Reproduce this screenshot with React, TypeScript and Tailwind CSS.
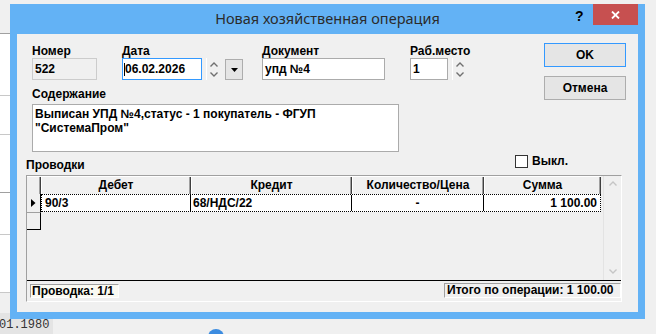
const UI = "font-['Liberation_Sans',Arial,sans-serif] font-bold text-[12px] leading-[13px] text-black";

function Chevron({ dir, color }: { dir: "up" | "down"; color: string }) {
  return (
    <svg width="8" height="5" viewBox="0 0 8 5">
      <path
        d={dir === "up" ? "M0.5 4.5 L4 1 L7.5 4.5" : "M0.5 0.5 L4 4 L7.5 0.5"}
        fill="none"
        stroke={color}
        strokeWidth="1.4"
      />
    </svg>
  );
}

function Spinner({ gap }: { gap: string }) {
  return (
    <div className={`flex h-[22px] ${gap}`}>
      <div className="w-px bg-white" />
      <div className="ml-[3px] flex flex-col justify-center gap-[5px]">
        <Chevron dir="up" color="#707070" />
        <Chevron dir="down" color="#707070" />
      </div>
    </div>
  );
}

function Label({ children }: { children: React.ReactNode }) {
  return <div className="h-[13px] whitespace-nowrap">{children}</div>;
}

const cols = [
  { title: "Дебет", head: "w-[150px]", cell: "w-[149px] border-r border-black pl-[3px]", value: "90/3" },
  { title: "Кредит", head: "w-[161px]", cell: "w-[161px] border-r border-black pl-[2px]", value: "68/НДС/22" },
  { title: "Количество/Цена", head: "w-[132px]", cell: "w-[132px] border-r border-black text-center", value: "-" },
  { title: "Сумма", head: "w-[117px]", cell: "flex-1 pr-[3px] text-right", value: "1 100.00" },
];

export default function App() {
  return (
    <div className={`relative h-[334px] w-[656px] overflow-hidden bg-[#f0f0f0] ${UI}`}>
      {/* desktop behind the dialog */}
      <div className="flex h-[313px]">
        <div className="flex w-[10px] flex-col">
          <div className="h-[33px] bg-[#f0f0f0]" />
          <div className="h-px bg-[#a0a0a0]" />
          <div className="h-[61px] bg-white" />
          <div className="h-px bg-[#c8c8c8]" />
          <div className="h-[38px] bg-white" />
          <div className="h-px bg-[#c8c8c8]" />
          <div className="h-[57px] bg-white" />
          <div className="h-px bg-[#a0a0a0]" />
          <div className="h-[41px] bg-white" />
          <div className="h-px bg-[#c8c8c8]" />
          <div className="h-[57px] bg-white" />
          <div className="h-px bg-[#c8c8c8]" />
        </div>
      </div>
      <div className="flex h-[21px] items-start">
        <div className="h-full w-[53px] overflow-hidden bg-[#e4e4e4] pt-[5px] font-['Liberation_Mono',monospace] text-[12px] font-normal leading-[14px] text-[#333]">
          <span className="-ml-[1px] block">01.1980</span>
        </div>
        <div className="ml-[155px] mt-[16px] h-[16px] w-[16px] rounded-full bg-[#3c8ce0]" />
      </div>

      {/* dialog window */}
      <div className="absolute left-[10px] top-[4px] flex h-[315px] w-[635px] flex-col bg-[#63b2f5]">
        <div className="flex h-[30px] items-start">
          <div className="w-[70px]" />
          <div className="flex h-full flex-1 items-center justify-center pb-[1px] font-['Noto_Sans',sans-serif] text-[14.5px] font-normal text-[#2b2b2b]">
            Новая хозяйственная операция
          </div>
          <div className="flex w-[70px] items-start">
            <div className="mt-[4px] w-[8px] text-[14px] leading-[16px]">?</div>
            <div className="ml-[10px] flex h-[21px] w-[45px] items-center justify-center bg-[#c75050]">
              <svg width="9" height="8" viewBox="0 0 9 8">
                <path d="M1 0.5 L8 7.5 M8 0.5 L1 7.5" stroke="white" strokeWidth="1.8" />
              </svg>
            </div>
          </div>
        </div>

        <div className="mx-[7px] mb-[7px] flex flex-1 flex-col bg-[#f0f0f0]">
          <div className="flex items-start pt-[9px]">
            <div className="flex flex-col pl-[15px] pt-[2px]">
              <div className="flex items-start">
                <div className="w-[90px]">
                  <Label>Номер</Label>
                  <div className="flex h-[22px] w-[65px] items-center border border-[#cccccc] bg-[#f0f0f0] px-[2px]">522</div>
                </div>
                <div className="w-[140px]">
                  <Label>Дата</Label>
                  <div className="flex items-start">
                    <div className="flex h-[22px] w-[80px] items-center border border-[#3399ff] bg-white pl-px">
                      <span className="h-[13px] w-px bg-black" />
                      <span>06.02.2026</span>
                    </div>
                    <Spinner gap="ml-[4px]" />
                    <div className="ml-[7px] mt-px flex h-[21px] w-[18px] items-center justify-center border border-[#adadad] bg-[#e5e5e5]">
                      <svg width="7" height="4" viewBox="0 0 7 4">
                        <path d="M0 0 L7 0 L3.5 4 Z" fill="black" />
                      </svg>
                    </div>
                  </div>
                </div>
                <div className="w-[148px]">
                  <Label>Документ</Label>
                  <div className="flex h-[22px] w-[123px] items-center border border-[#ababab] bg-white px-[2px]">упд №4</div>
                </div>
                <div>
                  <Label>Раб.место</Label>
                  <div className="flex items-start">
                    <div className="flex h-[22px] w-[38px] items-center border border-[#ababab] bg-white px-[2px]">1</div>
                    <Spinner gap="ml-[4px]" />
                  </div>
                </div>
              </div>
              <div className="mt-[8px]">
                <Label>Содержание</Label>
              </div>
              <div className="mt-[3px] h-[48px] w-[367px] border border-[#ababab] bg-white px-[2px] pt-[2px] leading-[14px]">
                Выписан УПД №4,статус - 1 покупатель - ФГУП
                <br />
                "СистемаПром"
              </div>
            </div>
            <div className="ml-auto mr-[12px] flex w-[82px] flex-col gap-[9px]">
              <button className="h-[24px] w-[82px] border border-[#3399ff] bg-[#e5e5e5]">OK</button>
              <button className="h-[24px] w-[82px] border border-[#adadad] bg-[#e5e5e5]">Отмена</button>
            </div>
          </div>

          <div className="flex h-[23px] items-start pl-[9px]">
            <div className="w-[489px] pt-[7px]">Проводки</div>
            <div className="mt-[3px] flex items-center gap-[4px]">
              <div className="h-[13px] w-[13px] border border-[#333] bg-white" />
              <span>Выкл.</span>
            </div>
          </div>

          <div className="ml-[9px] flex h-[127px] w-[596px] flex-col border border-b-white border-l-[#a0a0a0] border-r-white border-t-[#a0a0a0]">
            <div className="flex h-[104px]">
              <div className="flex w-[576px] flex-col">
                <div className="flex h-[18px] border-t border-white">
                  <div className="w-[14px] border-r border-[#404040] shadow-[inset_-1px_0_0_#a0a0a0]" />
                  {cols.map((c) => (
                    <div
                      key={c.title}
                      className={`flex items-center justify-center border-l border-r border-l-white border-r-[#404040] shadow-[inset_-1px_0_0_#a0a0a0] ${c.head}`}
                    >
                      {c.title}
                    </div>
                  ))}
                </div>
                <div className="flex h-[18px]">
                  <div className="flex w-[14px] items-center justify-center border-r border-black">
                    <svg width="5" height="8" viewBox="0 0 5 8">
                      <path d="M0 0 L4.5 4 L0 8 Z" fill="black" />
                    </svg>
                  </div>
                  <div className="flex w-[560px] border border-dotted border-black bg-white">
                    {cols.map((c) => (
                      <div key={c.title} className={`flex items-center ${c.cell}`}>
                        <span className={c.title === "Сумма" ? "ml-auto" : c.title === "Количество/Цена" ? "mx-auto" : ""}>{c.value}</span>
                      </div>
                    ))}
                  </div>
                </div>
                <div className="h-[18px] w-[14px] border-b border-r border-t border-b-black border-r-black border-t-[#a0a0a0]" />
              </div>
              <div className="ml-[2px] flex w-[18px] flex-col items-center justify-between border-l border-[#e3e3e3] pb-[6px] pt-[5px]">
                <Chevron dir="up" color="#c5c5c5" />
                <Chevron dir="down" color="#c5c5c5" />
              </div>
            </div>
            <div className="h-px bg-black" />
            <div className="flex flex-1 items-start pl-[3px]">
              <div className="mt-[3px] flex h-[14px] w-[89px] items-center border border-b-white border-l-[#a0a0a0] border-r-white border-t-[#a0a0a0] bg-[#fafaf2] pl-px">
                Проводка: 1/1
              </div>
              <div className="ml-auto mt-[2px] flex h-[15px] w-[177px] items-center border border-b-white border-l-[#a0a0a0] border-r-white border-t-[#a0a0a0] pl-[2px]">
                Итого по операции: 1 100.00
              </div>
            </div>
          </div>
        </div>
      </div>
    </div>
  );
}
